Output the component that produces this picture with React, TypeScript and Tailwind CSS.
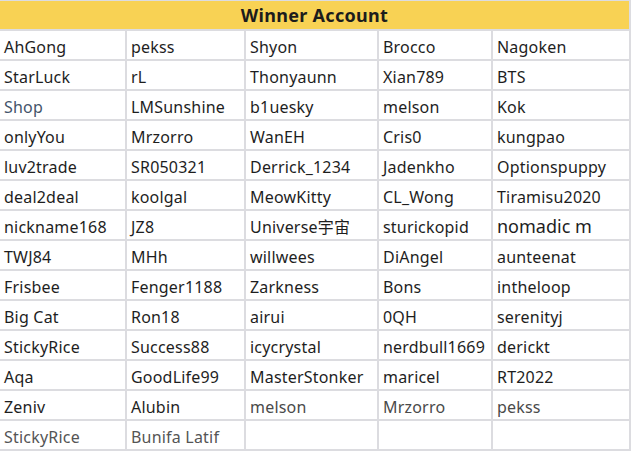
import React from "react";

type Cell = { t: string; c?: string; big?: boolean };

const rows: (string | Cell)[][] = [
  ["AhGong", "pekss", "Shyon", "Brocco", "Nagoken"],
  ["StarLuck", "rL", "Thonyaunn", "Xian789", "BTS"],
  [{ t: "Shop", c: "text-[#44546a]" }, "LMSunshine", "b1uesky", "melson", "Kok"],
  ["onlyYou", "Mrzorro", "WanEH", "Cris0", "kungpao"],
  ["luv2trade", "SR050321", "Derrick_1234", "Jadenkho", "Optionspuppy"],
  ["deal2deal", "koolgal", "MeowKitty", "CL_Wong", "Tiramisu2020"],
  ["nickname168", "JZ8", "Universe宇宙", "sturickopid", { t: "nomadic m", big: true }],
  ["TWJ84", "MHh", "willwees", "DiAngel", "aunteenat"],
  ["Frisbee", "Fenger1188", "Zarkness", "Bons", "intheloop"],
  ["Big Cat", "Ron18", "airui", "0QH", "serenityj"],
  ["StickyRice", "Success88", "icycrystal", "nerdbull1669", "derickt"],
  ["Aqa", "GoodLife99", "MasterStonker", "maricel", "RT2022"],
  [
    "Zeniv",
    "Alubin",
    { t: "melson", c: "text-[#4a4a4a]" },
    { t: "Mrzorro", c: "text-[#4a4a4a]" },
    { t: "pekss", c: "text-[#4a4a4a]" },
  ],
  [
    { t: "StickyRice", c: "text-[#555555]" },
    { t: "Bunifa Latif", c: "text-[#555555]" },
    "",
    "",
    "",
  ],
];

export default function App() {
  return (
    <div className="w-[632px] h-[454px] bg-white">
      <div
        className="w-[631px] bg-[#dcdce0] pt-px pr-[2px] pb-[2px] grid grid-cols-[125px_117px_131px_112px_136px] auto-rows-[28px] gap-[2px]"
        style={{ fontFamily: '"Noto Sans", "Noto Sans CJK SC", sans-serif' }}
      >
        <div className="col-span-5 bg-[#f8d254] flex items-center justify-center pt-px text-[18px] font-bold text-[#1c1c1c] tracking-[0.3px]">
          Winner Account
        </div>
        {rows.flat().map((cell, i) => {
          const c: Cell = typeof cell === "string" ? { t: cell } : cell;
          return (
            <div
              key={i}
              className={`bg-white flex items-center pl-[4px] pt-[3px] whitespace-nowrap overflow-hidden ${
                c.big ? "text-[18px]" : "text-[16px] tracking-[0.2px]"
              } ${c.c ?? "text-[#1e1e1e]"}`}
            >
              {c.t}
            </div>
          );
        })}
      </div>
    </div>
  );
}
